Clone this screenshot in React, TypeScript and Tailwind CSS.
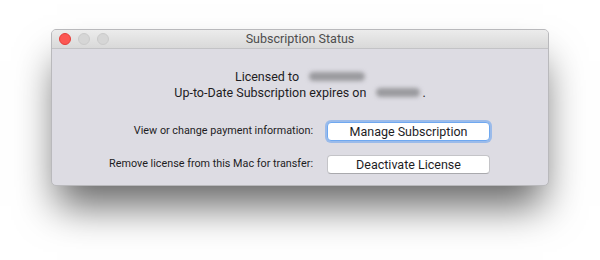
const Redacted = ({ w }: { w: number }) => (
  <span
    className="ml-[10px] inline-block h-[9px] translate-y-[-1px] rounded-full bg-[#9a9a9e] align-middle blur-[2px]"
    style={{ width: w }}
  />
);

export default function App() {
  return (
    <div className="h-[260px] w-[600px] overflow-hidden bg-white pl-[51px] pt-[29px] font-['Roboto','Liberation_Sans',sans-serif] text-[#1d1d1f]">
      <div className="h-[157px] w-[498px] overflow-hidden rounded-[5px] border border-[#b9b9bc] bg-[#dddce3] shadow-[0_26px_38px_-6px_rgba(0,0,0,0.6)]">
        {/* title bar */}
        <div className="relative flex h-[19px] items-center justify-center border-b border-[#c3c3c6] bg-linear-to-b from-[#ececec] to-[#d9d9d9]">
          <div className="absolute left-[7px] top-[3px] flex gap-[7px]">
            <span className="h-[12px] w-[12px] rounded-full border border-[#e33e3a] bg-[#fc5753]" />
            <span className="h-[12px] w-[12px] rounded-full border border-[#cacaca] bg-[#d6d6d6]" />
            <span className="h-[12px] w-[12px] rounded-full border border-[#cacaca] bg-[#d6d6d6]" />
          </div>
          <span className="text-[12.5px] text-[#4d4d4d]">Subscription Status</span>
        </div>

        {/* body */}
        <div className="flex flex-col items-center pt-[20px] text-[12.5px] leading-[16px]">
          <div className="flex items-center">
            Licensed to
            <Redacted w={56} />
          </div>
          <div className="flex items-center">
            Up-to-Date Subscription expires on
            <Redacted w={44} />
            <span className="ml-[2px]">.</span>
          </div>
        </div>

        <div className="mt-[21px] grid grid-cols-[261px_163px] items-center gap-x-[14px] gap-y-[14px] text-[10.8px]">
          <span className="text-right">View or change payment information:</span>
          <button className="h-[19px] rounded-[4px] border border-[#6fa8f0] bg-white text-[12.5px] shadow-[0_0_0_2px_rgba(100,160,240,0.55)]">
            Manage Subscription
          </button>
          <span className="text-right">Remove license from this Mac for transfer:</span>
          <button className="h-[19px] rounded-[4px] border border-[#c4c4c8] border-b-[#a9a9ad] bg-white text-[12.5px]">
            Deactivate License
          </button>
        </div>
      </div>
    </div>
  );
}
